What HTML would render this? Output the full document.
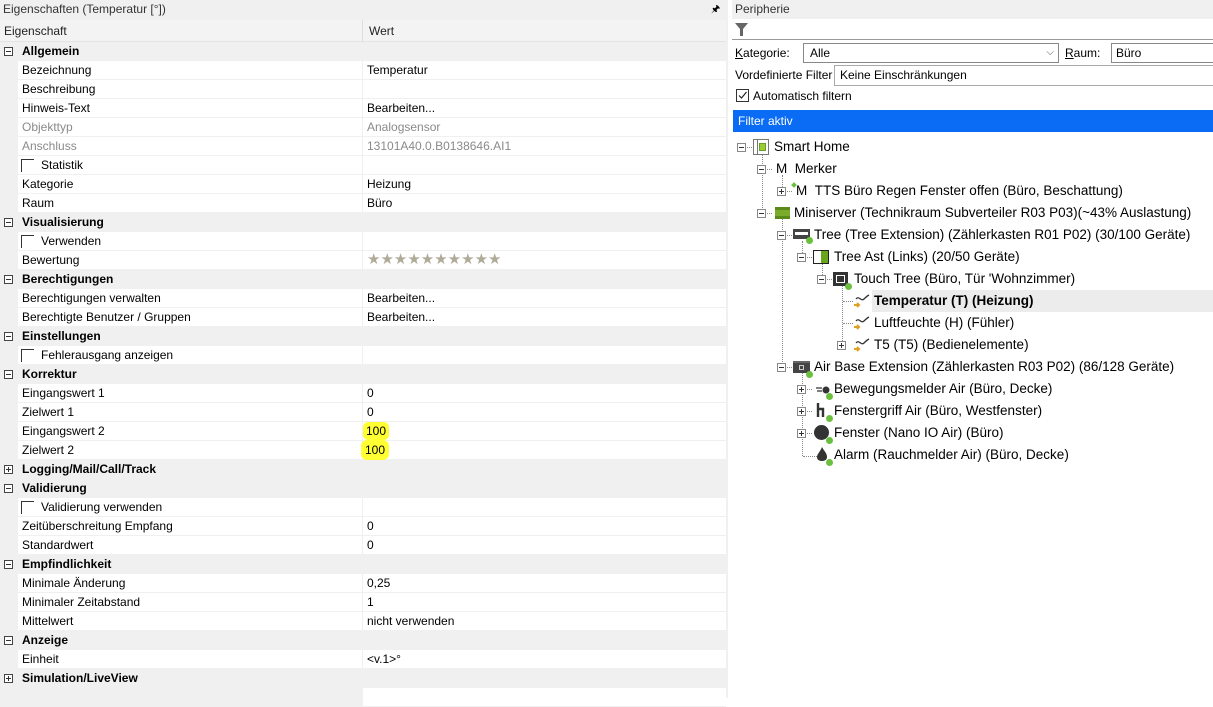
<!DOCTYPE html>
<html><head><meta charset="utf-8"><style>
*{margin:0;padding:0;box-sizing:border-box}
body{width:1213px;height:698px;overflow:hidden;background:#fff;font-family:"Liberation Sans",sans-serif;font-size:12px;color:#000;position:relative}
.a{position:absolute;white-space:nowrap}
#L{position:absolute;left:0;top:0;width:728px;height:698px;background:#f0f0f0}
.r{position:absolute;left:0;width:726px;height:19px;line-height:19px}
.c{background:#f0f0f0;font-weight:bold}
.i{background:#f0f0f0}
.i .k{position:absolute;left:18px;width:344px;top:0;height:18px;background:#fff;padding-left:4px}
.i .v{position:absolute;left:363px;width:363px;top:0;height:18px;background:#fff;padding-left:4px}
.g{color:#8a8a8a}
.bx{position:absolute;left:4px;top:5px;width:9px;height:9px;border:1px solid #444;background:#fff}
.bx:before{content:"";position:absolute;left:1px;top:3px;width:5px;height:1px;background:#333}
.pl:after{content:"";position:absolute;left:3px;top:1px;width:1px;height:5px;background:#333}
.c .t{position:absolute;left:22px}
.cb{display:inline-block;width:13px;height:13px;border-left:1px solid #333;border-top:1px solid #333;vertical-align:-3px;margin-right:7px;margin-left:-1px}
#R{position:absolute;left:732px;top:0;width:481px;height:698px;background:#fff}
.tr{position:absolute;font-size:13.5px;height:22px;line-height:22px;white-space:nowrap}
.eb{position:absolute;width:9px;height:9px;border:1px solid #888;background:#fff}
.eb:before{content:"";position:absolute;left:1px;top:3px;width:5px;height:1px;background:#333}
.ep:after{content:"";position:absolute;left:3px;top:1px;width:1px;height:5px;background:#333}
.dot{position:absolute;width:7px;height:7px;border-radius:50%;background:#6bbf3f}
.vl{position:absolute;border-left:1px dotted #888;width:0}
.hl{position:absolute;border-top:1px dotted #888;height:0}
#W{position:absolute;left:0;top:1px;width:728px;height:697px}
#T{position:absolute;left:0;top:1px;width:481px;height:600px}
</style></head><body>
<div id="L">
<div class="a" style="left:0;top:0;width:728px;height:19px;line-height:18px;padding-left:3px;color:#333;background:#f0f0f0">Eigenschaften (Temperatur [°])</div>
<div class="a" style="left:711px;top:2px;font-size:10px">&#x1F588;</div>
<div class="a" style="left:0;top:20px;width:726px;height:22px;background:#f3f3f3;border-bottom:1px solid #e4e4e4"></div>
<div class="a" style="left:4px;top:21px;line-height:21px;color:#222">Eigenschaft</div>
<div class="a" style="left:362px;top:20px;height:22px;border-left:1px solid #ddd"></div>
<div class="a" style="left:369px;top:21px;line-height:21px;color:#222">Wert</div>
<div id="W">
<div class="r c" style="top:41px"><span class="bx"></span><span class="t">Allgemein</span></div>
<div class="r i" style="top:60px"><div class="k">Bezeichnung</div><div class="v">Temperatur</div></div>
<div class="r i" style="top:79px"><div class="k">Beschreibung</div><div class="v"></div></div>
<div class="r i" style="top:98px"><div class="k">Hinweis-Text</div><div class="v">Bearbeiten...</div></div>
<div class="r i g" style="top:117px"><div class="k">Objekttyp</div><div class="v">Analogsensor</div></div>
<div class="r i g" style="top:136px"><div class="k">Anschluss</div><div class="v">13101A40.0.B0138646.AI1</div></div>
<div class="r i" style="top:155px"><div class="k"><span class="cb"></span>Statistik</div><div class="v"></div></div>
<div class="r i" style="top:174px"><div class="k">Kategorie</div><div class="v">Heizung</div></div>
<div class="r i" style="top:193px"><div class="k">Raum</div><div class="v">Büro</div></div>
<div class="r c" style="top:212px"><span class="bx"></span><span class="t">Visualisierung</span></div>
<div class="r i" style="top:231px"><div class="k"><span class="cb"></span>Verwenden</div><div class="v"></div></div>
<div class="r i" style="top:250px"><div class="k">Bewertung</div><div class="v" style="color:#b0aa98;font-size:15px;letter-spacing:0px;line-height:18px">★★★★★★★★★★</div></div>
<div class="r c" style="top:269px"><span class="bx"></span><span class="t">Berechtigungen</span></div>
<div class="r i" style="top:288px"><div class="k">Berechtigungen verwalten</div><div class="v">Bearbeiten...</div></div>
<div class="r i" style="top:307px"><div class="k">Berechtigte Benutzer / Gruppen</div><div class="v">Bearbeiten...</div></div>
<div class="r c" style="top:326px"><span class="bx"></span><span class="t">Einstellungen</span></div>
<div class="r i" style="top:345px"><div class="k"><span class="cb"></span>Fehlerausgang anzeigen</div><div class="v"></div></div>
<div class="r c" style="top:364px"><span class="bx"></span><span class="t">Korrektur</span></div>
<div class="r i" style="top:383px"><div class="k">Eingangswert 1</div><div class="v">0</div></div>
<div class="r i" style="top:402px"><div class="k">Zielwert 1</div><div class="v">0</div></div>
<div class="r i" style="top:421px"><div class="k">Eingangswert 2</div><div class="v"><span style="background:#ffff33;padding:2px 3px;border-radius:5px;margin-left:-4px">100</span></div></div>
<div class="r i" style="top:440px"><div class="k">Zielwert 2</div><div class="v"><span style="background:#ffff33;padding:3px 4px;border-radius:6px;margin-left:-6px">100</span></div></div>
<div class="r c" style="top:459px"><span class="bx pl"></span><span class="t">Logging/Mail/Call/Track</span></div>
<div class="r c" style="top:478px"><span class="bx"></span><span class="t">Validierung</span></div>
<div class="r i" style="top:497px"><div class="k"><span class="cb"></span>Validierung verwenden</div><div class="v"></div></div>
<div class="r i" style="top:516px"><div class="k">Zeitüberschreitung Empfang</div><div class="v">0</div></div>
<div class="r i" style="top:535px"><div class="k">Standardwert</div><div class="v">0</div></div>
<div class="r c" style="top:554px"><span class="bx"></span><span class="t">Empfindlichkeit</span></div>
<div class="r i" style="top:573px"><div class="k">Minimale Änderung</div><div class="v">0,25</div></div>
<div class="r i" style="top:592px"><div class="k">Minimaler Zeitabstand</div><div class="v">1</div></div>
<div class="r i" style="top:611px"><div class="k">Mittelwert</div><div class="v">nicht verwenden</div></div>
<div class="r c" style="top:630px"><span class="bx"></span><span class="t">Anzeige</span></div>
<div class="r i" style="top:649px"><div class="k">Einheit</div><div class="v">&lt;v.1&gt;°</div></div>
<div class="r c" style="top:668px"><span class="bx pl"></span><span class="t">Simulation/LiveView</span></div>
<div class="r i" style="top:687px"><div class="k" style="background:#f0f0f0"></div><div class="v"></div></div>
</div>
</div>

<div id="R">
<div class="a" style="left:0;top:0;width:481px;height:19px;line-height:18px;padding-left:3px;color:#333;background:#f0f0f0">Peripherie</div>
<svg class="a" style="left:3px;top:23px" width="13" height="13"><path d="M0 0H13L8 6V13H5V6Z" fill="#666"/></svg>
<div class="a" style="left:0;top:39px;width:481px;border-top:1px solid #999"></div>
<div class="a" style="left:3px;top:45px;line-height:16px"><u>K</u>ategorie:</div>
<div class="a" style="left:71px;top:43px;width:256px;height:20px;border:1px solid #888;line-height:18px;padding-left:6px">Alle<span style="position:absolute;right:4px;top:0;color:#555;font-size:10px">&#x2335;</span></div>
<div class="a" style="left:333px;top:45px;line-height:16px"><u>R</u>aum:</div>
<div class="a" style="left:379px;top:43px;width:110px;height:20px;border:1px solid #888;line-height:18px;padding-left:4px">Büro</div>
<div class="a" style="left:3px;top:67px;line-height:16px">Vordefinierte Filter</div>
<div class="a" style="left:102px;top:65px;width:390px;height:21px;border:1px solid #aaa;line-height:19px;padding-left:5px">Keine Einschränkungen</div>
<div class="a" style="left:4px;top:89px;width:13px;height:13px;border:1px solid #333"><svg width="11" height="11" style="position:absolute;left:0;top:0"><path d="M2 5.5L4.5 8L9.5 2" stroke="#222" fill="none" stroke-width="1.2"/></svg></div>
<div class="a" style="left:21px;top:88px;line-height:16px">Automatisch filtern</div>
<div class="a" style="left:1px;top:110px;width:480px;height:22px;background:#0a6cf5;color:#fff;line-height:22px;padding-left:5px">Filter aktiv</div>

<div id="T">
<div class="vl" style="left:30px;top:152px;height:61px"></div>
<div class="vl" style="left:50px;top:174px;height:16px"></div>
<div class="vl" style="left:50px;top:218px;height:149px"></div>
<div class="vl" style="left:70px;top:240px;height:16px"></div>
<div class="vl" style="left:90px;top:262px;height:16px"></div>
<div class="vl" style="left:110px;top:284px;height:60px"></div>
<div class="vl" style="left:70px;top:372px;height:83px"></div>
<div class="hl" style="left:111px;top:300px;width:10px"></div>
<div class="hl" style="left:111px;top:322px;width:10px"></div>
<div class="hl" style="left:71px;top:455px;width:14px"></div>

<div class="eb" style="left:5px;top:142px"></div><div class="hl" style="left:15px;top:146px;width:5px"></div>
<div class="a" style="left:21px;top:138px;width:16px;height:16px;border:1px solid #777;background:#fff"><div style="position:absolute;left:3px;top:0;width:1px;height:14px;background:#777"></div><div style="position:absolute;left:5px;top:3px;width:7px;height:8px;border:1px solid #6a9e2a;background:#9acd32"></div></div>
<div class="tr" style="left:42px;top:135px">Smart Home</div>

<div class="eb" style="left:25px;top:164px"></div><div class="hl" style="left:35px;top:168px;width:5px"></div>
<div class="tr" style="left:44px;top:157px">M&nbsp;&nbsp;Merker</div>

<div class="eb ep" style="left:45px;top:186px"></div><div class="hl" style="left:55px;top:190px;width:5px"></div>
<div class="a" style="left:60px;top:182px;width:4px;height:4px;background:#6bbf3f;transform:rotate(45deg)"></div>
<div class="tr" style="left:64px;top:179px">M&nbsp;&nbsp;TTS Büro Regen Fenster offen (Büro, Beschattung)</div>

<div class="eb" style="left:25px;top:208px"></div><div class="hl" style="left:35px;top:212px;width:5px"></div>
<div class="a" style="left:43px;top:206px;width:15px;height:12px;background:#7cab2c;border-top:3px solid #5a8a1a;border-bottom:3px solid #5a8a1a"></div>
<div class="tr" style="left:62px;top:201px">Miniserver (Technikraum Subverteiler R03 P03)(~43% Auslastung)</div>

<div class="eb" style="left:45px;top:230px"></div><div class="hl" style="left:55px;top:234px;width:5px"></div>
<div class="a" style="left:61px;top:228px;width:17px;height:10px;background:#444"><div style="position:absolute;left:2px;top:3px;width:13px;height:3px;background:#fff"></div></div>
<div class="dot" style="left:74px;top:236px"></div>
<div class="tr" style="left:82px;top:223px">Tree (Tree Extension) (Zählerkasten R01 P02) (30/100 Geräte)</div>

<div class="eb" style="left:65px;top:252px"></div><div class="hl" style="left:75px;top:256px;width:5px"></div>
<div class="a" style="left:81px;top:249px;width:16px;height:14px;border:1px solid #222;background:#fff"><div style="position:absolute;right:0;top:0;width:7px;height:12px;background:#6aa51e"></div></div>
<div class="tr" style="left:102px;top:245px">Tree Ast (Links) (20/50 Geräte)</div>

<div class="eb" style="left:85px;top:274px"></div><div class="hl" style="left:95px;top:278px;width:5px"></div>
<div class="a" style="left:101px;top:271px;width:15px;height:14px;background:#333"><div style="position:absolute;left:3px;top:3px;width:9px;height:8px;border:1px solid #fff"></div></div>
<div class="dot" style="left:113px;top:282px"></div>
<div class="tr" style="left:122px;top:267px">Touch Tree (Büro, Tür 'Wohnzimmer)</div>

<div class="a" style="left:140px;top:289px;width:341px;height:22px;background:#ececec"></div>
<svg class="a" style="left:121px;top:292px" width="18" height="16"><path d="M3 6C6 2 8 9 11 6C13 4 14 3 16 2" stroke="#333" fill="none" stroke-width="1.3"/><path d="M1 12H6M4 10L6 12L4 14" stroke="#e2a020" fill="none" stroke-width="2"/></svg>
<div class="tr" style="left:142px;top:289px;font-weight:bold">Temperatur (T) (Heizung)</div>
<svg class="a" style="left:121px;top:314px" width="18" height="16"><path d="M3 6C6 2 8 9 11 6C13 4 14 3 16 2" stroke="#333" fill="none" stroke-width="1.3"/><path d="M1 12H6M4 10L6 12L4 14" stroke="#e2a020" fill="none" stroke-width="2"/></svg>
<div class="tr" style="left:142px;top:311px">Luftfeuchte (H) (Fühler)</div>
<div class="eb ep" style="left:105px;top:340px"></div>
<svg class="a" style="left:121px;top:336px" width="18" height="16"><path d="M3 6C6 2 8 9 11 6C13 4 14 3 16 2" stroke="#333" fill="none" stroke-width="1.3"/><path d="M1 12H6M4 10L6 12L4 14" stroke="#e2a020" fill="none" stroke-width="2"/></svg>
<div class="tr" style="left:142px;top:333px">T5 (T5) (Bedienelemente)</div>

<div class="eb" style="left:45px;top:362px"></div><div class="hl" style="left:55px;top:366px;width:5px"></div>
<div class="a" style="left:61px;top:360px;width:17px;height:12px;background:#444;border-top:2px solid #666"><div style="position:absolute;left:6px;top:2px;width:5px;height:5px;border:1px solid #ccc"></div></div>
<div class="dot" style="left:74px;top:370px"></div>
<div class="tr" style="left:82px;top:355px">Air Base Extension (Zählerkasten R03 P02) (86/128 Geräte)</div>

<div class="eb ep" style="left:65px;top:384px"></div><div class="hl" style="left:75px;top:388px;width:5px"></div>
<svg class="a" style="left:83px;top:382px" width="16" height="12"><path d="M1 5H7M2 8H7" stroke="#333" stroke-width="1.3"/><circle cx="11" cy="7" r="3.5" fill="#333"/></svg>
<div class="dot" style="left:94px;top:392px"></div>
<div class="tr" style="left:102px;top:377px">Bewegungsmelder Air (Büro, Decke)</div>

<div class="eb ep" style="left:65px;top:406px"></div><div class="hl" style="left:75px;top:410px;width:5px"></div>
<svg class="a" style="left:84px;top:401px" width="12" height="16"><path d="M2 1V15M2 7H7V15" stroke="#333" fill="none" stroke-width="2.4"/></svg>
<div class="dot" style="left:94px;top:414px"></div>
<div class="tr" style="left:102px;top:399px">Fenstergriff Air (Büro, Westfenster)</div>

<div class="eb ep" style="left:65px;top:428px"></div><div class="hl" style="left:75px;top:432px;width:5px"></div>
<div class="a" style="left:82px;top:424px;width:15px;height:15px;border-radius:50%;background:#333"></div>
<div class="dot" style="left:94px;top:436px"></div>
<div class="tr" style="left:102px;top:421px">Fenster (Nano IO Air) (Büro)</div>

<svg class="a" style="left:84px;top:445px" width="12" height="16"><path d="M6 1C8 5 11 7 11 11C11 14 8.5 15 6 15C3.5 15 1 14 1 11C1 8 4 6 6 1Z" fill="#333"/></svg>
<div class="dot" style="left:94px;top:458px"></div>
<div class="tr" style="left:102px;top:443px">Alarm (Rauchmelder Air) (Büro, Decke)</div>
</div>
</div>
</body></html>
